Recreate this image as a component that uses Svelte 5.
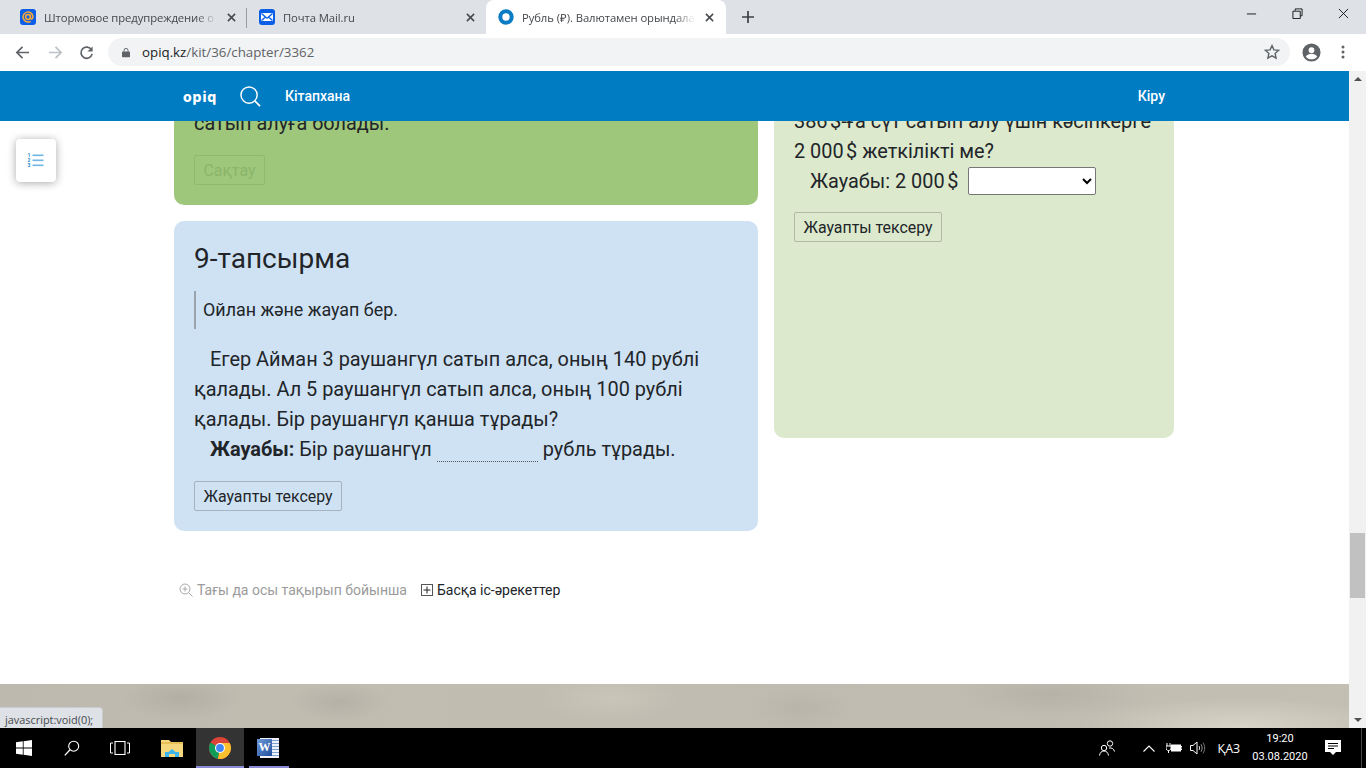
<script>
    const tabs = [
        { id: 'mail', title: 'Штормовое предупреждение о', active: false },
        { id: 'post', title: 'Почта Mail.ru', active: false },
        { id: 'opiq', title: 'Рубль (₽). Валютамен орындала', active: true }
    ];
</script>

<div class="screen">
    <!-- Browser tabs -->
    <div class="tabbar">
        {#each tabs as tab, i}
            <div class="tab" class:active={tab.active}>
                {#if tab.id === 'mail'}
                    <svg class="favicon" viewBox="0 0 16 16">
                        <rect width="16" height="16" rx="3" fill="#0a5fe6" />
                        <circle cx="8" cy="8" r="2.4" fill="none" stroke="#ffa930" stroke-width="1.5" />
                        <path d="M10.4 5.6v3.2c0 1.8 2.6 1.6 2.6-.8A5 5 0 1 0 10.6 12.3" fill="none" stroke="#ffa930" stroke-width="1.5" />
                    </svg>
                {:else if tab.id === 'post'}
                    <svg class="favicon" viewBox="0 0 16 16">
                        <rect width="16" height="16" rx="3" fill="#0a5fe6" />
                        <path d="M2 4h12v8H2z" fill="#fff" />
                        <path d="M2.5 4.5 6.5 8 2.5 11.5M13.5 4.5 9.5 8l4 3.5M6.5 8 8 9.2 9.5 8" fill="none" stroke="#0a5fe6" stroke-width="1.4" />
                    </svg>
                {:else}
                    <svg class="favicon" viewBox="0 0 16 16">
                        <circle cx="8" cy="8" r="5.7" fill="none" stroke="#0a7cc4" stroke-width="4" />
                    </svg>
                {/if}
                <span class="tab-title">{tab.title}</span>
                <svg class="tab-close" viewBox="0 0 10 10">
                    <path d="M1 1l8 8M9 1l-8 8" stroke="#45484c" stroke-width="1.7" />
                </svg>
                {#if i === 0}<span class="tab-sep"></span>{/if}
            </div>
        {/each}
        <svg class="new-tab" viewBox="0 0 12 12">
            <path d="M6 0v12M0 6h12" stroke="#3c4043" stroke-width="1.7" />
        </svg>
        <div class="window-controls">
            <svg viewBox="0 0 12 12"><path d="M1 6.5h10" stroke="#111" /></svg>
            <svg viewBox="0 0 12 12"><path d="M3.5 3V1h7.5v7.5H9M1 3.5h8v8H1z" fill="none" stroke="#111" /></svg>
            <svg viewBox="0 0 12 12"><path d="M1 1l10 10M11 1 1 11" stroke="#111" /></svg>
        </div>
    </div>

    <!-- Address bar -->
    <div class="toolbar">
        <svg class="tool back" viewBox="0 0 16 16"><path d="M15 8H2.5M8 2 2 8l6 6" fill="none" stroke="#5f6368" stroke-width="1.8" /></svg>
        <svg class="tool forward" viewBox="0 0 16 16"><path d="M1 8h12.5M8 2l6 6-6 6" fill="none" stroke="#bdc1c6" stroke-width="1.8" /></svg>
        <svg class="tool reload" viewBox="0 0 16 16"><path d="M13.5 5.5A6 6 0 1 0 14 9.5" fill="none" stroke="#5f6368" stroke-width="1.8" /><path d="M14.5 1.5v5.5H9z" fill="#5f6368" /></svg>
        <div class="omnibox">
            <svg class="lock" viewBox="0 0 10 12"><path d="M2.5 5V3.4a2.5 2.5 0 0 1 5 0V5" fill="none" stroke="#5f6368" stroke-width="1.2" /><rect y="4.6" width="10" height="7.4" rx="1" fill="#5f6368" /></svg>
            <span class="url"><b>opiq.kz</b>/kit/36/chapter/3362</span>
            <svg class="star" viewBox="0 0 16 16"><path d="M8 1.6l1.9 4.3 4.7.5-3.5 3.1 1 4.6L8 11.8l-4.1 2.3 1-4.6-3.5-3.1 4.7-.5z" fill="none" stroke="#5f6368" stroke-width="1.4" /></svg>
        </div>
        <svg class="avatar" viewBox="0 0 20 20">
            <circle cx="10" cy="10" r="9.5" fill="#5f6368" />
            <circle cx="10" cy="7.6" r="3" fill="#fff" />
            <path d="M4 14.2c1.4-2.2 3.6-3 6-3s4.6.8 6 3c-1.4 2-3.6 3-6 3s-4.6-1-6-3z" fill="#fff" />
        </svg>
        <svg class="kebab" viewBox="0 0 4 14"><circle cx="2" cy="2" r="1.5" fill="#5f6368" /><circle cx="2" cy="7" r="1.5" fill="#5f6368" /><circle cx="2" cy="12" r="1.5" fill="#5f6368" /></svg>
    </div>

    <div class="viewport">
        <div class="site">
            <nav class="navbar">
                <span class="logo">opiq</span>
                <svg class="nav-search" viewBox="0 0 22 22"><circle cx="9.5" cy="9.5" r="8.5" fill="none" stroke="#fff" stroke-width="1.5" /><path d="M15.5 15.5 21 21" stroke="#fff" stroke-width="1.8" /></svg>
                <span class="nav-link">Кітапхана</span>
                <span class="nav-link login">Кіру</span>
            </nav>

            <main class="scroller">
                <div class="columns">
                    <div class="col-left">
                        <section class="card green">
                            <p class="text">сатып алуға болады.</p>
                            <button class="btn disabled">Сақтау</button>
                        </section>
                        <section class="card blue">
                            <h2>9-тапсырма</h2>
                            <div class="note">Ойлан және жауап бер.</div>
                            <p class="text indent">Егер Айман 3 раушангүл сатып алса, оның 140 рублі қалады. Ал 5 раушангүл сатып алса, оның 100 рублі қалады. Бір раушангүл қанша тұрады?</p>
                            <p class="text indent"><b>Жауабы:</b> Бір раушангүл <span class="blank"></span> рубль тұрады.</p>
                            <button class="btn">Жауапты тексеру</button>
                        </section>
                    </div>
                    <section class="card lime">
                        <p class="text">386&#8239;$-ға сүт сатып алу үшін кәсіпкерге 2&nbsp;000&#8239;$ жеткілікті ме?</p>
                        <p class="text indent answer">Жауабы: 2&nbsp;000&#8239;$ <select class="choice"><option></option></select></p>
                        <button class="btn">Жауапты тексеру</button>
                    </section>
                </div>

                <div class="actions">
                    <span class="action muted">
                        <svg viewBox="0 0 14 14"><circle cx="6" cy="6" r="5" fill="none" stroke="#a9a9a9" /><path d="M9.7 9.7 13.5 13.5" stroke="#a9a9a9" /><path d="M3.5 6h5M6 3.5v5" stroke="#a9a9a9" /></svg>
                        Тағы да осы тақырып бойынша
                    </span>
                    <span class="action">
                        <svg viewBox="0 0 12 12"><rect x=".5" y=".5" width="11" height="11" fill="none" stroke="#555" /><path d="M2.5 6h7M6 2.5v7" stroke="#222" /></svg>
                        Басқа іс-әрекеттер
                    </span>
                </div>
            </main>

            <div class="footer-strip"></div>

            <button class="toc" aria-label="Мазмұны">
                <svg viewBox="0 0 17 15">
                    <rect x="5.5" y="1.5" width="11" height="1.6" fill="#6fb6e4" />
                    <rect x="5.5" y="6.5" width="11" height="1.6" fill="#6fb6e4" />
                    <rect x="5.5" y="11.5" width="11" height="1.6" fill="#6fb6e4" />
                    <text x="2" y="4.2" class="toc-num">1</text>
                    <text x="2" y="9.2" class="toc-num">2</text>
                    <text x="2" y="14.2" class="toc-num">3</text>
                </svg>
            </button>
            <div class="status">javascript:void(0);</div>
        </div>

        <div class="scrollbar">
            <span class="arrow up"></span>
            <span class="thumb"></span>
            <span class="arrow down"></span>
        </div>
    </div>

    <!-- Windows taskbar -->
    <footer class="taskbar">
        <div class="slot">
            <svg class="i16" viewBox="0 0 16 16"><path d="M0 2.3 6.8 1.3v6.3H0zM7.6 1.2 16 0v7.6H7.6zM0 8.4h6.8v6.3L0 13.7zM7.6 8.4H16V16l-8.4-1.2z" fill="#fff" /></svg>
        </div>
        <div class="slot">
            <svg class="i16" viewBox="0 0 16 16"><circle cx="9.7" cy="6.2" r="5" fill="none" stroke="#fff" stroke-width="1.1" /><path d="M6 9.8.8 15.4" stroke="#fff" stroke-width="1.3" /></svg>
        </div>
        <div class="slot">
            <svg class="task-view" viewBox="0 0 20 14"><rect x="5" y=".5" width="10" height="13" fill="none" stroke="#fff" stroke-width="1.1" /><path d="M3 2H.5v10H3M17 2h2.5v10H17" fill="none" stroke="#fff" /></svg>
        </div>
        <div class="slot explorer">
            <svg class="i22" viewBox="0 0 22 18">
                <path d="M0 1h8l2 2h12v15H0z" fill="#f5d77e" />
                <rect y="3" width="22" height="2" fill="#e8bf56" />
                <path d="M4 18v-5h3.5l3.5-3 3.5 3H18v5h-4v-3H8v3z" fill="#3db4ea" />
            </svg>
        </div>
        <div class="slot running on">
            <svg class="i22" viewBox="0 0 22 22">
                <circle cx="11" cy="11" r="11" fill="#db4437" />
                <path d="M11 11 1.5 5.5A11 11 0 0 0 9 21.8z" fill="#0f9d58" />
                <path d="M11 6h9.7A11 11 0 0 1 9 21.8L11 11z" fill="#fbc02d" />
                <circle cx="11" cy="11" r="5" fill="#fff" />
                <circle cx="11" cy="11" r="3.9" fill="#4285f4" />
            </svg>
        </div>
        <div class="slot running">
            <div class="word">
                <span class="word-page"></span>
                <span class="word-w">W</span>
            </div>
        </div>

        <div class="tray">
            <svg class="people" viewBox="0 0 16 16"><circle cx="5" cy="8" r="2.7" fill="none" stroke="#fff" /><path d="M.5 15.5c.5-3 2-4.5 4.5-4.5s4 1.5 4.5 4.5" fill="none" stroke="#fff" /><circle cx="11" cy="3.5" r="2.7" fill="none" stroke="#fff" /><path d="M10 8c3-.5 5 1 5.5 3.5" fill="none" stroke="#fff" /></svg>
            <svg class="chevron" viewBox="0 0 12 7"><path d="M.5 6.5 6 1l5.5 5.5" fill="none" stroke="#fff" stroke-width="1.1" /></svg>
            <svg class="battery" viewBox="0 0 16 12"><rect x="5" y="2.5" width="10" height="7" fill="#fff" /><path d="M15 4.5h1v3h-1M1 1v3M4 1v3M0 4h5v2c0 1.5-1 2.5-2.5 2.5S0 7.5 0 6zM2.5 8.5V11" fill="none" stroke="#fff" /></svg>
            <svg class="volume" viewBox="0 0 16 14"><path d="M.5 4.5h2.500L7 1v12L3 9.5H.5z" fill="none" stroke="#fff" /><path d="M9 5c.8 1.2.8 2.8 0 4" fill="none" stroke="#ddd" /><path d="M11 3.3c1.5 2.3 1.5 5.1 0 7.4" fill="none" stroke="#999" /><path d="M13 1.5c2.2 3.5 2.2 7.500 0 11" fill="none" stroke="#777" /></svg>
            <span class="lang">ҚАЗ</span>
            <div class="clock"><span>19:20</span><span>03.08.2020</span></div>
            <svg class="notify" viewBox="0 0 16 16"><path d="M0 0h16v12h-5l-3 3-3-3H0z" fill="#fff" /><path d="M3 3.5h10M3 6h10M3 8.5h6" stroke="#000" /></svg>
            <span class="desktop-edge"></span>
        </div>
    </footer>
</div>

<style>
:global(body) {
    margin: 0;
    overflow: hidden;
}

.screen {
    width: 1366px;
    height: 768px;
    display: flex;
    flex-direction: column;
    overflow: hidden;
    font-family: Roboto, "Liberation Sans", sans-serif;
    color: #212529;
    background: #fff;
}

/* Tabs */
.tabbar {
    height: 34px;
    flex: none;
    display: flex;
    align-items: stretch;
    padding-left: 8px;
    background: #dee1e6;
    font-family: "Open Sans", "Liberation Sans", sans-serif;
}

.tab {
    position: relative;
    width: 239px;
    display: flex;
    align-items: center;
    padding-left: 12px;
    box-sizing: border-box;
    font-size: 11.3px;
    color: #45484c;
}

.tab.active {
    width: 240px;
    background: #fff;
    border-radius: 8px 8px 0 0;
}

.favicon {
    width: 16px;
    height: 16px;
    flex: none;
}

.tab-title {
    width: 173px;
    margin-left: 8px;
    white-space: nowrap;
    overflow: hidden;
    letter-spacing: -.1px;
    -webkit-mask-image: linear-gradient(to right, #000 88%, transparent);
    mask-image: linear-gradient(to right, #000 88%, transparent);
}

.tab-close {
    width: 9px;
    height: 9px;
    margin-left: 10px;
    flex: none;
}

.tab-sep {
    position: absolute;
    right: 0;
    top: 8px;
    width: 1px;
    height: 20px;
    background: #9a9da1;
}

.new-tab {
    width: 12px;
    height: 12px;
    margin: 11px 0 0 16px;
}

.window-controls {
    margin-left: auto;
    display: flex;
    gap: 35px;
    padding: 8px 17px 0 0;
}

.window-controls svg {
    width: 11px;
    height: 11px;
}

/* Address bar */
.toolbar {
    height: 37px;
    flex: none;
    box-sizing: border-box;
    display: flex;
    align-items: center;
    padding: 0 16px 1px 15px;
    background: #fff;
}

.tool {
    width: 15px;
    height: 15px;
    flex: none;
}

.forward {
    margin-left: 18px;
}

.reload {
    margin-left: 16px;
}

.omnibox {
    margin-left: 14px;
    width: 1182px;
    height: 28px;
    display: flex;
    align-items: center;
    box-sizing: border-box;
    padding: 0 10px 0 14px;
    border-radius: 14px;
    background: #f1f3f4;
    flex: none;
}

.lock {
    width: 8px;
    height: 11px;
}

.url {
    margin-left: 12px;
    font-family: "Open Sans", "Liberation Sans", sans-serif;
    font-size: 13.3px;
    color: #5f6368;
}

.url b {
    font-weight: 400;
    color: #202124;
}

.star {
    width: 16px;
    height: 16px;
    margin-left: auto;
}

.avatar {
    width: 19px;
    height: 19px;
    margin-left: 12px;
    flex: none;
}

.kebab {
    width: 4px;
    height: 14px;
    margin-left: 20px;
    flex: none;
}

/* Page */
.viewport {
    flex: 1;
    min-height: 0;
    display: flex;
}

.site {
    position: relative;
    flex: 1;
    min-width: 0;
    display: flex;
    flex-direction: column;
}

.navbar {
    position: relative;
    z-index: 2;
    height: 50px;
    flex: none;
    display: flex;
    align-items: center;
    padding: 0 184px 0 183px;
    background: #007cc3;
    color: #fff;
}

.logo {
    width: 34px;
    font-family: Inter, sans-serif;
    font-weight: 800;
    font-size: 14px;
    letter-spacing: .9px;
}

.nav-search {
    width: 21px;
    height: 21px;
    margin-left: 23px;
}

.nav-link {
    margin-left: 24px;
    font-size: 14px;
    font-weight: 500;
}

.login {
    margin-left: auto;
}

.scroller {
    flex: 1;
    min-height: 0;
    overflow: hidden;
}

/* the page is scrolled: the first line of the cards runs under the navbar */
.columns {
    width: 1000px;
    margin: -14px 0 0 174px;
    display: flex;
    gap: 16px;
    align-items: flex-start;
}

.col-left {
    width: 584px;
    display: flex;
    flex-direction: column;
    gap: 16px;
}

.card {
    box-sizing: border-box;
    padding: 0 20px 20px;
    border-radius: 0 0 10px 10px;
}

.green {
    padding-top: 2px;
    background: #9ec77b;
}

.blue {
    padding-top: 20px;
    background: #cfe2f3;
    border-radius: 10px;
}

.lime {
    width: 400px;
    min-height: 331px;
    background: #dce9cd;
}

.text {
    margin: 0;
    font-size: 19.9px;
    line-height: 30px;
}

.indent {
    text-indent: 16px;
}

h2 {
    margin: 0 0 15px;
    font-size: 28px;
    font-weight: 400;
    line-height: 35px;
}

.note {
    height: 38px;
    line-height: 38px;
    margin-bottom: 16px;
    padding-left: 7px;
    border-left: 2px solid #9aa3ab;
    font-size: 17.9px;
}

.blank {
    display: inline-block;
    width: 101px;
    height: 18px;
    border-bottom: 1px dotted #555;
    vertical-align: -6px;
}

.btn {
    display: block;
    height: 30px;
    padding: 0 8.5px;
    border: 1px solid rgba(0, 0, 0, .2);
    border-radius: 2px;
    background: transparent;
    font-family: inherit;
    font-size: 15.9px;
    color: #212529;
}

.green .btn {
    margin-top: 16px;
}

.blue .btn {
    margin-top: 16px;
}

.lime .btn {
    margin-top: 15px;
}

.disabled {
    border-color: rgba(0, 0, 0, .07);
    color: #8bb56a;
}

.answer {
    height: 30px;
}

.choice {
    width: 128px;
    height: 28px;
    margin: 0 0 0 5px;
    padding: 0;
    text-indent: 0;
    background: #fff;
    border: 1px solid #767676;
    border-radius: 2px;
    vertical-align: top;
}

.actions {
    display: flex;
    gap: 14px;
    margin: 50px 0 0 179px;
    font-size: 14px;
    line-height: 18px;
}

.action {
    display: flex;
    align-items: center;
    gap: 4px;
    color: #212529;
}

.action svg {
    width: 14px;
    height: 14px;
}

.action:last-child svg {
    width: 12px;
    height: 12px;
}

.muted {
    color: #9b9b9b;
}

.footer-strip {
    height: 44px;
    flex: none;
    background:
        radial-gradient(ellipse 160px 30px at 1240px 44px, #d8d4c8, transparent),
        radial-gradient(ellipse 60px 22px at 180px 14px, #b3afa4, transparent),
        radial-gradient(ellipse 50px 20px at 340px 18px, #b5b1a6, transparent),
        radial-gradient(ellipse 70px 24px at 610px 14px, #c9c5b9, transparent),
        radial-gradient(ellipse 50px 20px at 800px 24px, #b9b5aa, transparent),
        radial-gradient(ellipse 100px 24px at 1050px 10px, #b6b2a7, transparent),
        linear-gradient(to right, #bdb9ae, #c1bdb1 30%, #bfbbb0 60%, #c3bfb3);
}

.toc {
    position: absolute;
    left: 16px;
    top: 68px;
    width: 40px;
    height: 43px;
    padding: 0;
    border: none;
    border-radius: 4px;
    background: #fff;
    box-shadow: 0 1px 8px rgba(0, 0, 0, .35);
    display: flex;
    align-items: center;
    justify-content: center;
}

.toc svg {
    width: 17px;
    height: 15px;
    margin-left: -1px;
}

.toc-num {
    font: 700 5px Roboto, sans-serif;
    fill: #1f88cc;
    text-anchor: middle;
}

.status {
    position: absolute;
    left: 0;
    bottom: 0;
    z-index: 3;
    width: 103px;
    height: 21px;
    box-sizing: border-box;
    padding: 4px 0 0 5px;
    border-top: 1px solid #c9ccd1;
    border-right: 1px solid #c9ccd1;
    border-radius: 0 4px 0 0;
    background: #dee1e6;
    font-family: "Open Sans", "Liberation Sans", sans-serif;
    font-size: 10.9px;
    line-height: 15px;
    color: #45484c;
}

.scrollbar {
    position: relative;
    width: 17px;
    flex: none;
    background: #f1f1f1;
    display: flex;
    flex-direction: column;
    align-items: center;
    justify-content: space-between;
    padding: 6px 0;
    box-sizing: border-box;
}

.arrow {
    width: 0;
    height: 0;
    border-left: 4px solid transparent;
    border-right: 4px solid transparent;
}

.up {
    border-bottom: 4px solid #505050;
}

.down {
    border-top: 4px solid #505050;
}

.thumb {
    position: absolute;
    left: 1px;
    right: 1px;
    top: 462px;
    height: 65px;
    background: #c1c1c1;
}

/* Taskbar */
.taskbar {
    height: 40px;
    flex: none;
    display: flex;
    align-items: stretch;
    background: #000;
    color: #fff;
}

.slot {
    width: 48px;
    display: flex;
    align-items: center;
    justify-content: center;
    box-sizing: border-box;
}

.explorer {
    margin-left: 4px;
}

.running {
    position: relative;
}

.running::after {
    content: "";
    position: absolute;
    left: 5px;
    right: 3px;
    bottom: 0;
    height: 2px;
    background: #8a8ad6;
}

.on {
    background: #333;
}

.on::after {
    left: 0;
    right: 0;
}

.i16 {
    width: 16px;
    height: 16px;
}

.task-view {
    width: 20px;
    height: 14px;
}

.i22 {
    width: 22px;
    height: 22px;
}

.word {
    position: relative;
    width: 22px;
    height: 20px;
}

.word-page {
    position: absolute;
    left: 3px;
    right: 0;
    top: 0;
    bottom: 0;
    background: repeating-linear-gradient(#eef2f8 0 2px, #7f9fd0 2px 3px);
}

.word-w {
    position: absolute;
    left: 0;
    top: 1px;
    width: 15px;
    height: 17px;
    background: linear-gradient(135deg, #6f9ad8, #1f4e9e);
    font: 700 12px/17px "Liberation Serif", serif;
    text-align: center;
    color: #fff;
}

.tray {
    margin-left: auto;
    display: flex;
    align-items: center;
    height: 100%;
    padding-right: 0;
}

.people {
    width: 16px;
    height: 16px;
}

.chevron {
    width: 12px;
    height: 7px;
    margin-left: 28px;
}

.battery {
    width: 16px;
    height: 12px;
    margin-left: 11px;
}

.volume {
    width: 16px;
    height: 14px;
    margin-left: 8px;
}

.lang {
    margin-left: 11px;
    font-family: "Open Sans", "Liberation Sans", sans-serif;
    font-size: 12px;
}

.clock {
    width: 68px;
    margin-left: 6px;
    display: flex;
    flex-direction: column;
    align-items: center;
    gap: 4px;
    font-family: Roboto, sans-serif;
    font-size: 11px;
    line-height: 14px;
}

.notify {
    width: 16px;
    height: 16px;
    margin-left: 11px;
}

.desktop-edge {
    width: 1px;
    height: 100%;
    margin: 0 4px 0 20px;
    background: #444;
}
</style>
